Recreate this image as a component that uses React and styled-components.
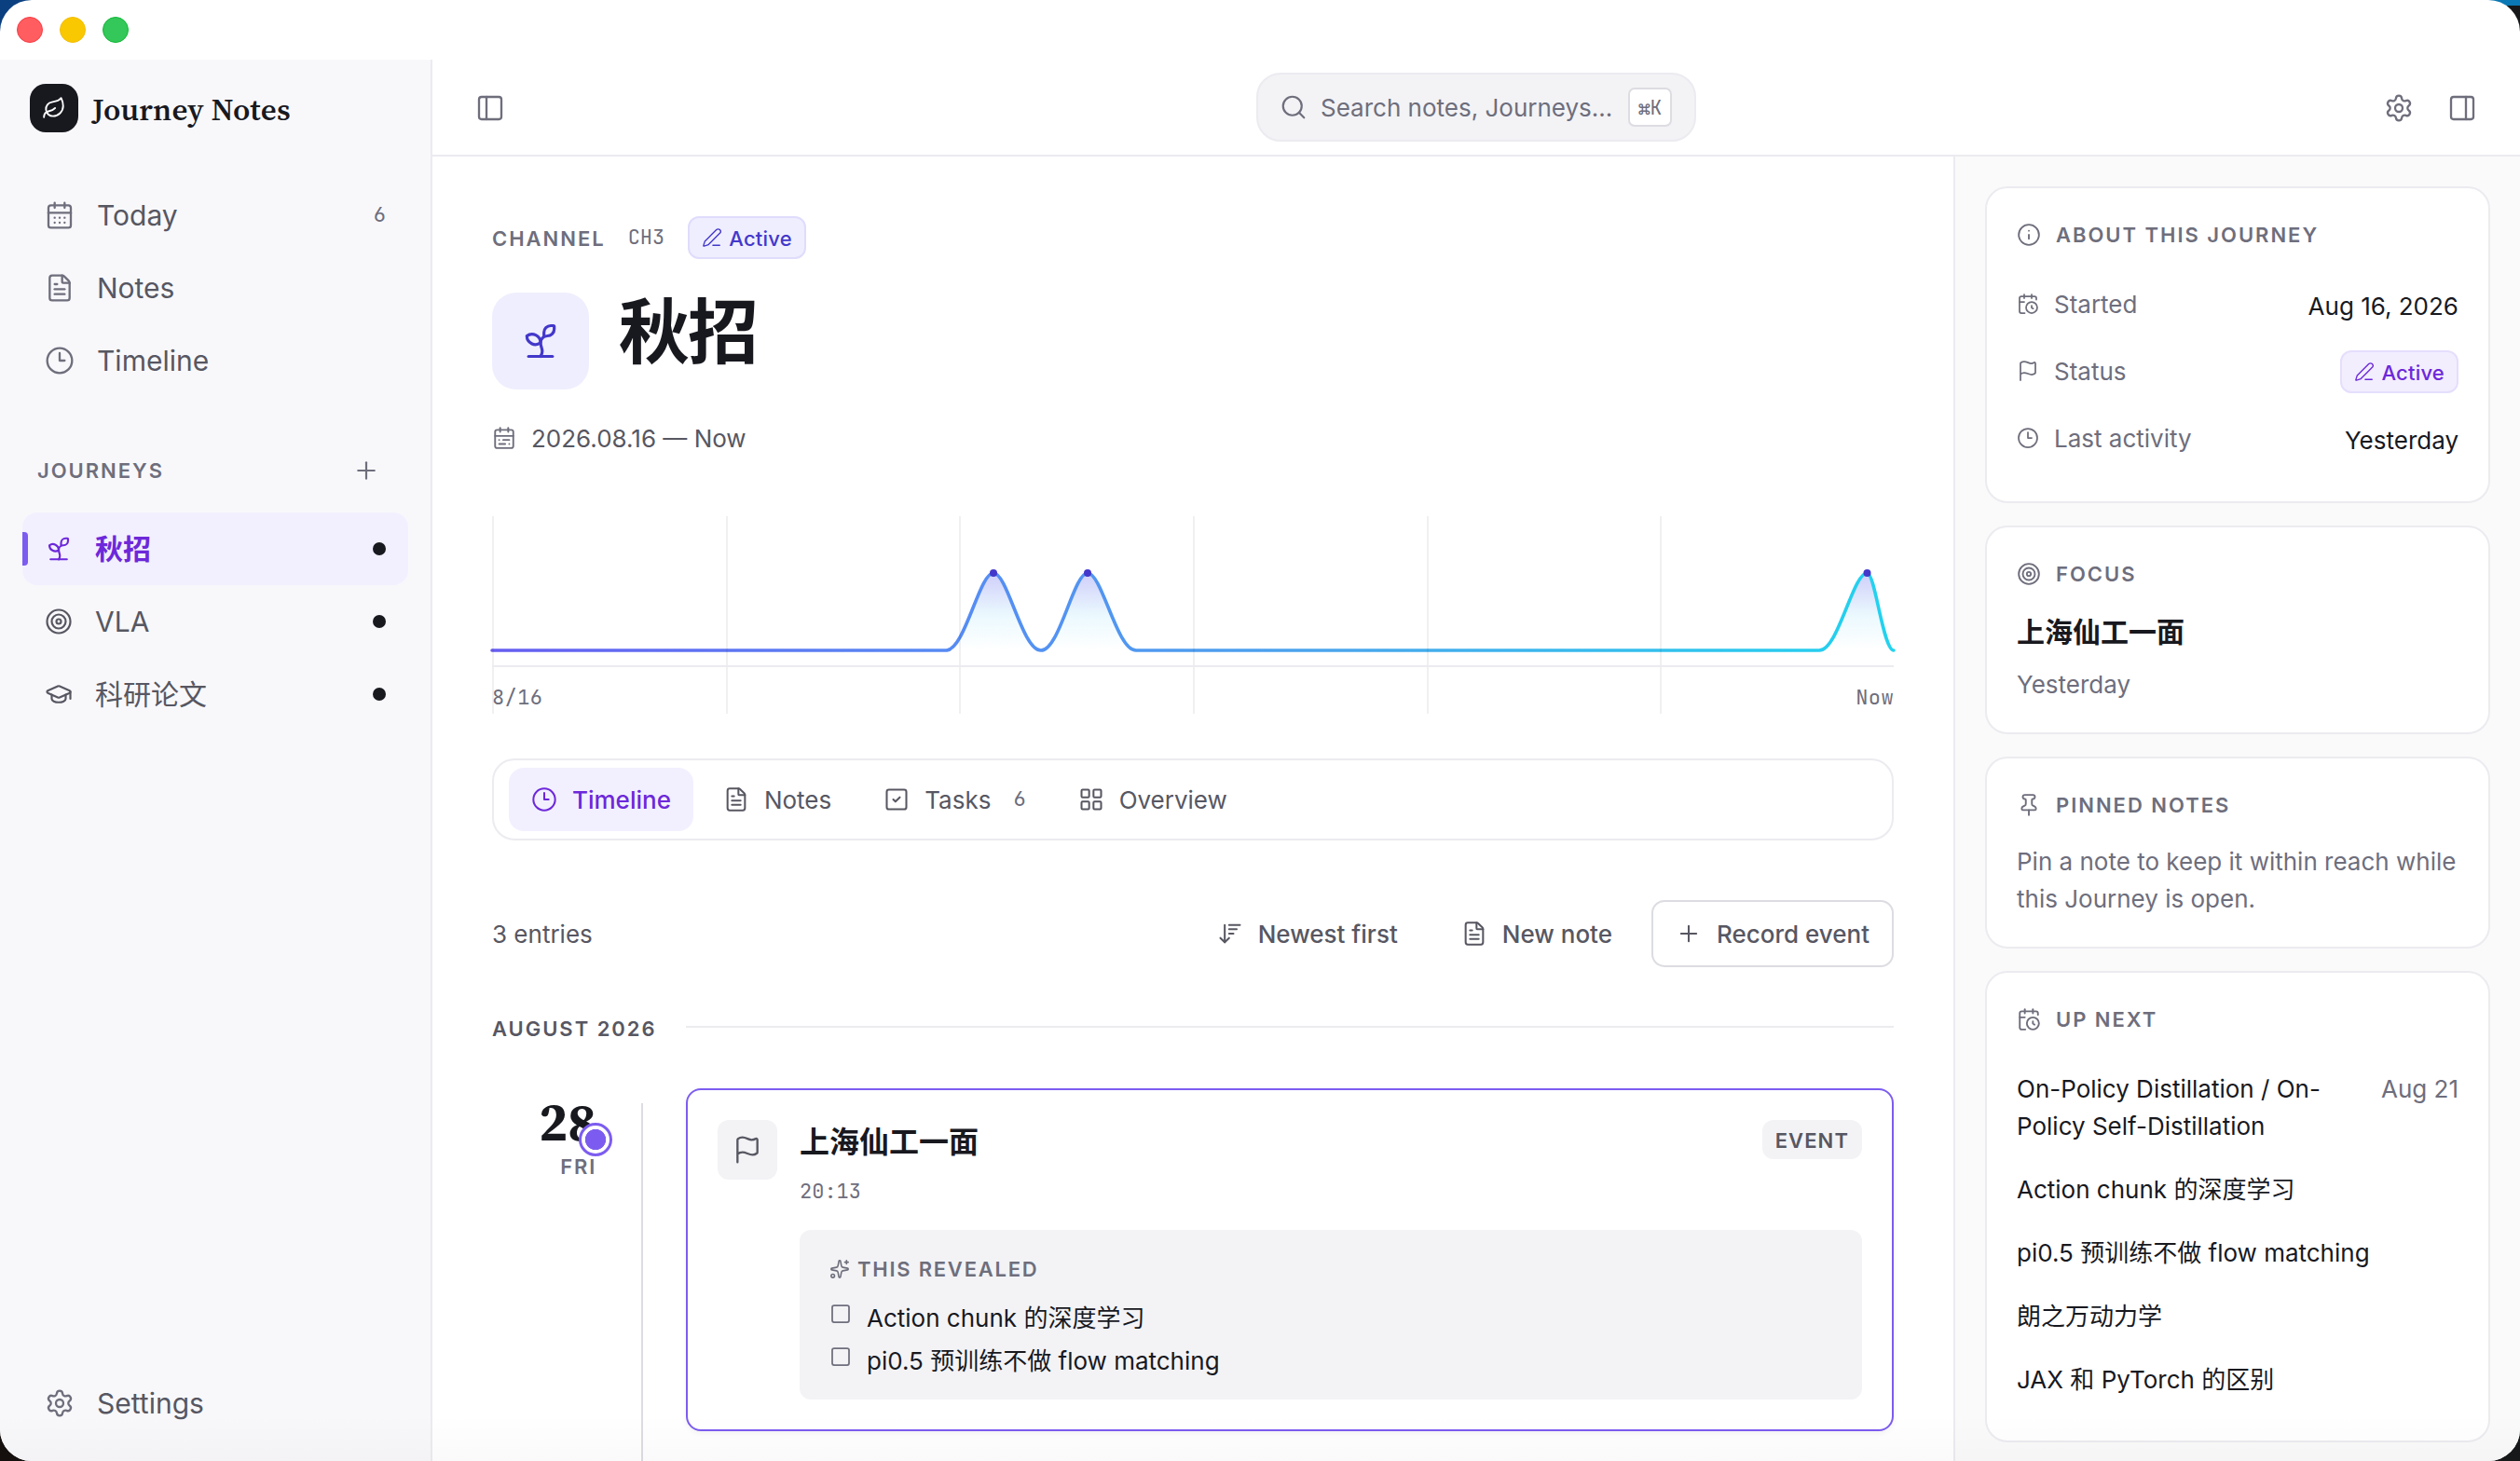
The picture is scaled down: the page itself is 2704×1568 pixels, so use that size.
import React from "react";
import styled, { createGlobalStyle } from "styled-components";
import {
  ArrowDownWideNarrow,
  CalendarClock,
  CalendarDays,
  CalendarRange,
  Clock3,
  FileText,
  Flag,
  GraduationCap,
  Info,
  LayoutGrid,
  Leaf,
  PanelLeft,
  PanelRight,
  PenLine,
  Pin,
  Plus,
  Search,
  Settings,
  Sparkles,
  Sprout,
  Square,
  SquareCheck,
  Target
} from "lucide-react";

const SANS = `Inter, "Noto Sans CJK SC", sans-serif`;
const SERIF = `"Source Serif 4", "Liberation Serif", serif`;
const MONO = `"JetBrains Mono", "DejaVu Sans Mono", monospace`;

const ink = "#18191f";
const body = "#575762";
const muted = "#6e6e7c";
const line = "#ebebf0";
const lineStrong = "#dcdce2";
const subtle = "#f3f3f6";
const violet = "#7c5cf0";
const violetText = "#6d28d9";
const violetSoft = "#f2f0ff";
const indigo = "#4338ca";
const indigoSoft = "#efeefe";

const GlobalStyle = createGlobalStyle`
  * {
    box-sizing: border-box;
  }
  html,
  body,
  #root {
    height: 100%;
    margin: 0;
  }
  body {
    overflow: hidden;
    font-family: ${SANS};
    font-size: 26px;
    color: ${ink};
    -webkit-font-smoothing: antialiased;
  }
  svg {
    display: block;
    flex-shrink: 0;
  }
`;

const Desktop = styled.div`
  height: 1568px;
  width: 2704px;
  background: linear-gradient(#0a78b4 0 6px, transparent 6px) right top / 50% 100%
      no-repeat,
    linear-gradient(#0b4080 0 50%, #15100e 50%) left / 50% 100% no-repeat,
    #16181a;
`;
const Window = styled.div`
  position: relative;
  height: 100%;
  display: flex;
  flex-direction: column;
  overflow: hidden;
  border-radius: 34px;
  background: #fff;
  &::after {
    content: "";
    position: absolute;
    left: 0;
    right: 0;
    bottom: 0;
    height: 50px;
    background: linear-gradient(rgba(0, 0, 0, 0), rgba(0, 0, 0, 0.02));
    pointer-events: none;
  }
`;
const TitleBar = styled.div`
  height: 64px;
  flex-shrink: 0;
  display: flex;
  align-items: center;
  gap: 18px;
  padding-left: 18px;
`;
const Light = styled.span`
  width: 28px;
  height: 28px;
  border-radius: 50%;
  background: ${props => props.$fill};
  border: 1px solid ${props => props.$edge};
`;
const Layout = styled.div`
  flex: 1;
  min-height: 0;
  display: flex;
`;

/* Sidebar */
const Sidebar = styled.aside`
  width: 464px;
  flex-shrink: 0;
  display: flex;
  flex-direction: column;
  background: #f8f8fb;
  border-right: 2px solid ${line};
  padding: 0 24px 23px;
`;
const Brand = styled.div`
  height: 104px;
  display: flex;
  align-items: center;
  gap: 15px;
  padding-left: 8px;
`;
const BrandMark = styled.span`
  width: 52px;
  height: 52px;
  display: grid;
  place-items: center;
  border-radius: 17px;
  background: ${ink};
  color: #fff;
`;
const BrandName = styled.span`
  padding-top: 2px;
  font-family: ${SERIF};
  font-size: 33px;
  font-weight: 600;
  letter-spacing: 0.2px;
  white-space: nowrap;
`;
const NavList = styled.nav`
  display: flex;
  flex-direction: column;
  margin-top: ${props => props.$top || 0}px;
`;
const NavItem = styled.a`
  position: relative;
  height: 78px;
  display: flex;
  align-items: center;
  gap: 24px;
  padding: 0 24px;
  border-radius: 16px;
  font-size: 30px;
  color: ${props => (props.$active ? violetText : body)};
  font-weight: ${props => (props.$active ? 700 : 400)};
  background: ${props => (props.$active ? violetSoft : "transparent")};
  svg {
    color: ${props =>
      props.$active ? violetText : props.$journey ? body : muted};
  }
  &::before {
    content: "";
    display: ${props => (props.$active ? "block" : "none")};
    position: absolute;
    left: 0;
    top: 21px;
    width: 6px;
    height: 36px;
    border-radius: 0 4px 4px 0;
    background: ${violet};
  }
`;
const NavLabel = styled.span`
  flex: 1;
  line-height: 44px;
`;
const Count = styled.span`
  font-family: ${MONO};
  font-size: 22px;
  font-weight: 400;
  line-height: 30px;
  color: ${muted};
`;
const Dot = styled.span`
  width: 14px;
  height: 14px;
  border-radius: 50%;
  background: ${ink};
`;
const SectionHead = styled.div`
  height: 60px;
  margin-top: 49px;
  display: flex;
  align-items: center;
  justify-content: space-between;
  padding: 0 30px 0 16px;
  color: ${muted};
`;
const Caps = styled.span`
  font-size: 22px;
  font-weight: 600;
  letter-spacing: ${props => props.$track || 1.98}px;
  line-height: 30px;
  padding-top: ${props => props.$drop || 0}px;
  white-space: nowrap;
  color: ${props => props.$color || muted};
`;
const Spacer = styled.div`
  flex: 1;
`;

/* Top bar */
const Column = styled.div`
  flex: 1;
  min-width: 0;
  display: flex;
  flex-direction: column;
`;
const TopBar = styled.header`
  height: 104px;
  flex-shrink: 0;
  display: grid;
  grid-template-columns: 1fr auto 1fr;
  align-items: center;
  border-bottom: 2px solid ${line};
  padding: 0 46px;
  color: ${muted};
`;
const TopActions = styled.div`
  display: flex;
  gap: 36px;
  padding-top: 2px;
  justify-content: ${props => (props.$end ? "flex-end" : "flex-start")};
`;
const SearchBox = styled.div`
  width: 472px;
  height: 74px;
  display: flex;
  align-items: center;
  padding: 0 24px 0 23px;
  border: 2px solid ${line};
  border-radius: 26px;
  background: ${subtle};
  white-space: nowrap;
`;
const SearchText = styled.span`
  flex: 1;
  margin-left: 14px;
`;
const Kbd = styled.kbd`
  height: 42px;
  width: 47px;
  display: grid;
  place-items: center;
  border: 2px solid ${lineStrong};
  border-radius: 7px;
  background: #fff;
  font-family: ${MONO};
  font-size: 21px;
`;
const Content = styled.div`
  flex: 1;
  min-height: 0;
  display: flex;
`;

/* Journey page */
const Main = styled.main`
  width: 1632px;
  padding: 64px 64px 0;
  overflow: hidden;
`;
const Eyebrow = styled.div`
  height: 46px;
  display: flex;
  align-items: center;
`;
const Channel = styled.span`
  margin: -1px 25px 0 24px;
  font-family: ${MONO};
  font-size: 22px;
  color: ${muted};
`;
const Chip = styled.span`
  height: 46px;
  display: inline-flex;
  align-items: center;
  gap: 7px;
  padding: 0 13px;
  border: 2px solid ${props => (props.$indigo ? "#dfdcfc" : "#e6defc")};
  border-radius: 12px;
  background: ${props => (props.$indigo ? indigoSoft : "#f2eefe")};
  color: ${props => (props.$indigo ? indigo : violetText)};
  font-size: 22px;
  font-weight: 500;
  line-height: 30px;
  letter-spacing: 0.22px;
`;
const ChipLabel = styled.span`
  padding-top: 1px;
`;
const TitleRow = styled.div`
  margin-top: 36px;
  height: 104px;
  display: flex;
  gap: 32px;
`;
const TitleIcon = styled.span`
  width: 104px;
  height: 104px;
  display: grid;
  place-items: center;
  border-radius: 26px;
  background: ${indigoSoft};
  color: ${indigo};
`;
const Title = styled.h1`
  margin: 0;
  font-size: 76px;
  font-weight: 700;
  line-height: 84px;
  letter-spacing: -2px;
`;
const DateRow = styled.div`
  margin-top: 32px;
  height: 40px;
  display: flex;
  align-items: center;
  gap: 16px;
  color: ${body};
  svg {
    color: ${muted};
  }
`;
const Chart = styled.div`
  margin-top: 64px;
  height: 212px;
  svg {
    overflow: visible;
  }
`;
const Tabs = styled.div`
  margin-top: 48px;
  height: 88px;
  display: flex;
  gap: 8px;
  padding: 8px 16px;
  border: 2px solid ${line};
  border-radius: 24px;
`;
const Tab = styled.button`
  display: flex;
  align-items: center;
  gap: 16px;
  padding: 0 24px;
  border: 0;
  border-radius: 16px;
  font: ${props => (props.$active ? 500 : 400)} 26px ${SANS};
  background: ${props => (props.$active ? violetSoft : "none")};
  color: ${props => (props.$active ? violetText : body)};
  ${Count} {
    margin-left: 8px;
  }
`;
const Toolbar = styled.div`
  margin-top: 64px;
  height: 72px;
  display: flex;
  align-items: center;
  gap: 16px;
  color: ${body};
`;
const Button = styled.button`
  height: 72px;
  display: flex;
  align-items: center;
  gap: 16px;
  padding: 0 24px;
  border: 2px solid ${props => (props.$outlined ? lineStrong : "transparent")};
  border-radius: 14px;
  background: none;
  font: 500 26px ${SANS};
  color: ${body};
`;
const MonthRow = styled.div`
  margin-top: 45px;
  height: 40px;
  display: flex;
  align-items: center;
`;
const MonthLabel = styled.div`
  width: 208px;
  display: flex;
`;
const Rule = styled.span`
  flex: 1;
  height: 2px;
  margin-top: -2px;
  background: ${line};
`;
const Entry = styled.div`
  margin-top: 45px;
  display: grid;
  grid-template-columns: 112px 98px 1fr;
  height: 440px;
`;
const EntryDate = styled.div`
  position: relative;
  display: flex;
  flex-direction: column;
  align-items: flex-end;
  padding-top: 6px;
`;
const Day = styled.span`
  margin-bottom: 3px;
  font-family: ${SERIF};
  font-size: 57px;
  font-weight: 700;
  line-height: 60px;
`;
const Marker = styled.span`
  position: absolute;
  right: -17px;
  top: 37px;
  width: 36px;
  height: 36px;
  border: 3px solid ${violet};
  border-radius: 50%;
  background: radial-gradient(circle, ${violet} 10.8px, #fff 11.5px);
`;
const Rail = styled.span`
  width: 2px;
  margin: 16px 0 0 48px;
  background: ${lineStrong};
`;
const EventCard = styled.article`
  height: 368px;
  margin-left: -2px;
  display: grid;
  grid-template-columns: 64px 1fr;
  column-gap: 24px;
  padding: 32px;
  border: 2px solid ${violet};
  border-radius: 16px;
  box-shadow: 0 2px 6px rgba(20, 20, 40, 0.05);
`;
const EventIcon = styled.span`
  width: 64px;
  height: 64px;
  display: grid;
  place-items: center;
  border-radius: 12px;
  background: ${subtle};
  color: ${body};
`;
const EventHead = styled.div`
  height: 118px;
  display: flex;
  justify-content: space-between;
  align-items: flex-start;
`;
const EventTitle = styled.div`
  font-size: 32px;
  font-weight: 700;
  line-height: 48px;
`;
const EventTime = styled.div`
  margin-top: 14px;
  font-family: ${MONO};
  font-size: 22px;
  line-height: 30px;
  color: ${muted};
`;
const EventBadge = styled.span`
  height: 42px;
  display: flex;
  align-items: center;
  padding: 0 14px;
  border-radius: 12px;
  background: ${subtle};
`;
const Revealed = styled.div`
  height: 182px;
  padding: 26px 32px 0;
  border-radius: 12px;
  background: ${subtle};
`;
const RevealedHead = styled.div`
  height: 31px;
  margin-bottom: 15px;
  display: flex;
  align-items: center;
  gap: 8px;
  color: ${muted};
`;
const RevealedItem = styled.div`
  height: 46px;
  display: flex;
  align-items: center;
  gap: 16px;
  line-height: 40px;
  svg {
    margin-top: -10px;
    color: ${muted};
  }
`;

/* Inspector */
const Inspector = styled.aside`
  width: 608px;
  display: flex;
  flex-direction: column;
  gap: 24px;
  padding: 32px 32px 0;
  border-left: 2px solid ${line};
  background: #fafafa;
`;
const Card = styled.section`
  height: ${props => props.$height}px;
  flex-shrink: 0;
  padding: 32px;
  border: 2px solid ${line};
  border-radius: 24px;
  background: #fff;
`;
const CardHead = styled.div`
  height: 36px;
  display: flex;
  align-items: center;
  gap: 16px;
  color: ${muted};
`;
const Facts = styled.div`
  margin-top: 20px;
`;
const Fact = styled.div`
  height: 72px;
  display: flex;
  align-items: center;
  gap: 16px;
  color: ${muted};
`;
const FactValue = styled.span`
  margin: ${props => (props.$chip ? 2 : 5)}px 0 0 auto;
  color: ${ink};
`;
const FocusTitle = styled.div`
  margin-top: 22px;
  font-size: 30px;
  font-weight: 700;
  line-height: 44px;
`;
const Muted = styled.p`
  margin: ${props => props.$top}px 0 0;
  line-height: 39.5px;
  color: ${muted};
`;
const NextList = styled.div`
  margin-top: 37px;
  display: flex;
  flex-direction: column;
  gap: 28px;
`;
const NextItem = styled.div`
  display: flex;
  justify-content: space-between;
  gap: 40px;
  line-height: 40px;
  span:last-child:not(:first-child) {
    color: ${muted};
    white-space: nowrap;
  }
`;

const Icon = ({ as: Glyph, size = 32 }) => (
  <Glyph size={size} strokeWidth={1.75} />
);

const CardTitle = ({ icon, children }) => (
  <CardHead>
    <Icon as={icon} size={26} />
    <Caps>{children}</Caps>
  </CardHead>
);

const Status = ({ indigo: isIndigo }) => (
  <Chip $indigo={isIndigo}>
    <PenLine size={22} strokeWidth={1.5} />
    <ChipLabel>Active</ChipLabel>
  </Chip>
);

const BASE = 144;
const PEAK = 61;
const bumps = [
  [487, 538, 589],
  [589, 639, 691],
  [1424, 1475.5, 1504]
];
const bumpPath = ([from, mid, to]) => {
  const a = mid - from;
  const b = to - mid;
  return `C${from + a * 0.4} ${BASE} ${mid - a * 0.3} ${PEAK} ${mid} ${PEAK} C${mid +
    b * 0.3} ${PEAK} ${to - b * 0.4} ${BASE} ${to} ${BASE}`;
};
const curve = `M0 ${BASE} ${bumps
  .map(bump => `H${bump[0]} ${bumpPath(bump)}`)
  .join(" ")}`;

const ActivityChart = () => (
  <Chart>
    <svg width="1504" height="212" viewBox="0 0 1504 212" fill="none">
      <defs>
        <linearGradient
          id="stroke"
          gradientUnits="userSpaceOnUse"
          x1="0"
          x2="1504"
          y1="0"
          y2="0"
        >
          <stop offset="0" stopColor="#665df1" />
          <stop offset="0.35" stopColor="#558ef3" />
          <stop offset="0.6" stopColor="#4aa5ec" />
          <stop offset="1" stopColor="#22d3ee" />
        </linearGradient>
        <linearGradient id="area" x1="0" x2="0" y1="0" y2="1">
          <stop offset="0" stopColor="#cfcefa" />
          <stop offset="0.55" stopColor="#ebf9fe" />
          <stop offset="1" stopColor="#ffffff" />
        </linearGradient>
      </defs>
      <path d={`${curve} Z`} fill="url(#area)" />
      <path
        d={curve}
        stroke="url(#stroke)"
        strokeWidth="3.6"
        strokeLinecap="round"
        strokeLinejoin="round"
      />
      {bumps.map(([, x]) => (
        <circle key={x} cx={x} cy={PEAK} r="4" fill={indigo} />
      ))}
      {[0, 1, 2, 3, 4, 5].map(i => (
        <rect
          key={i}
          x={Math.round((i * 1504) / 6)}
          width="2"
          height="212"
          fill="rgba(24, 24, 50, 0.065)"
        />
      ))}
      <rect y="160" width="1504" height="2" fill={line} />
      <g fill={muted} fontFamily={MONO} fontSize="22" letterSpacing="0.4">
        <text x="0" y="202">
          8/16
        </text>
        <text x="1504" y="202" textAnchor="end">
          Now
        </text>
      </g>
    </svg>
  </Chart>
);

const nav = [
  { label: "Today", icon: CalendarDays, count: 6 },
  { label: "Notes", icon: FileText },
  { label: "Timeline", icon: Clock3 }
];
const journeys = [
  { label: "秋招", icon: Sprout, active: true },
  { label: "VLA", icon: Target },
  { label: "科研论文", icon: GraduationCap }
];
const tabs = [
  { label: "Timeline", icon: Clock3, active: true },
  { label: "Notes", icon: FileText },
  { label: "Tasks", icon: SquareCheck, count: 6 },
  { label: "Overview", icon: LayoutGrid }
];
const revealed = ["Action chunk 的深度学习", "pi0.5 预训练不做 flow matching"];
const upNext = [
  { label: "On-Policy Distillation / On-Policy Self-Distillation", date: "Aug 21" },
  { label: "Action chunk 的深度学习" },
  { label: "pi0.5 预训练不做 flow matching" },
  { label: "朗之万动力学" },
  { label: "JAX 和 PyTorch 的区别" }
];

const App = () => (
  <>
    <GlobalStyle />
    <Desktop>
      <Window>
        <TitleBar>
          <Light $fill="#ff5d60" $edge="#f93c45" />
          <Light $fill="#fac800" $edge="#f0be08" />
          <Light $fill="#34c759" $edge="#10b936" />
        </TitleBar>
        <Layout>
          <Sidebar>
            <Brand>
              <BrandMark>
                <Icon as={Leaf} size={26} />
              </BrandMark>
              <BrandName>Journey Notes</BrandName>
            </Brand>
            <NavList $top={24}>
              {nav.map(item => (
                <NavItem key={item.label}>
                  <Icon as={item.icon} />
                  <NavLabel>{item.label}</NavLabel>
                  {item.count && <Count>{item.count}</Count>}
                </NavItem>
              ))}
            </NavList>
            <SectionHead>
              <Caps>JOURNEYS</Caps>
              <Icon as={Plus} size={30} />
            </SectionHead>
            <NavList $top={15}>
              {journeys.map(item => (
                <NavItem key={item.label} $active={item.active} $journey>
                  <Icon as={item.icon} size={30} />
                  <NavLabel>{item.label}</NavLabel>
                  <Dot />
                </NavItem>
              ))}
            </NavList>
            <Spacer />
            <NavItem>
              <Icon as={Settings} />
              <NavLabel>Settings</NavLabel>
            </NavItem>
          </Sidebar>
          <Column>
            <TopBar>
              <TopActions>
                <Icon as={PanelLeft} />
              </TopActions>
              <SearchBox>
                <Icon as={Search} size={30} />
                <SearchText>Search notes, Journeys...</SearchText>
                <Kbd>⌘K</Kbd>
              </SearchBox>
              <TopActions $end>
                <Icon as={Settings} />
                <Icon as={PanelRight} />
              </TopActions>
            </TopBar>
            <Content>
              <Main>
                <Eyebrow>
                  <Caps $drop={2}>CHANNEL</Caps>
                  <Channel>CH3</Channel>
                  <Status indigo />
                </Eyebrow>
                <TitleRow>
                  <TitleIcon>
                    <Icon as={Sprout} size={44} />
                  </TitleIcon>
                  <Title>秋招</Title>
                </TitleRow>
                <DateRow>
                  <Icon as={CalendarRange} size={26} />
                  2026.08.16 — Now
                </DateRow>
                <ActivityChart />
                <Tabs>
                  {tabs.map(tab => (
                    <Tab key={tab.label} $active={tab.active}>
                      <Icon as={tab.icon} size={28} />
                      {tab.label}
                      {tab.count && <Count>{tab.count}</Count>}
                    </Tab>
                  ))}
                </Tabs>
                <Toolbar>
                  3 entries
                  <Spacer />
                  <Button>
                    <Icon as={ArrowDownWideNarrow} size={28} />
                    Newest first
                  </Button>
                  <Button>
                    <Icon as={FileText} size={28} />
                    New note
                  </Button>
                  <Button $outlined>
                    <Icon as={Plus} size={28} />
                    Record event
                  </Button>
                </Toolbar>
                <MonthRow>
                  <MonthLabel>
                    <Caps $color={body} $drop={2}>
                      AUGUST 2026
                    </Caps>
                  </MonthLabel>
                  <Rule />
                </MonthRow>
                <Entry>
                  <EntryDate>
                    <Day>28</Day>
                    <Caps $track={1.76}>FRI</Caps>
                    <Marker />
                  </EntryDate>
                  <Rail />
                  <EventCard>
                    <EventIcon>
                      <Icon as={Flag} />
                    </EventIcon>
                    <div>
                      <EventHead>
                        <div>
                          <EventTitle>上海仙工一面</EventTitle>
                          <EventTime>20:13</EventTime>
                        </div>
                        <EventBadge>
                          <Caps $color={body} $track={1.1} $drop={2}>
                            EVENT
                          </Caps>
                        </EventBadge>
                      </EventHead>
                      <Revealed>
                        <RevealedHead>
                          <Icon as={Sparkles} size={22} />
                          <Caps $track={1.76}>THIS REVEALED</Caps>
                        </RevealedHead>
                        {revealed.map(item => (
                          <RevealedItem key={item}>
                            <Icon as={Square} size={24} />
                            {item}
                          </RevealedItem>
                        ))}
                      </Revealed>
                    </div>
                  </EventCard>
                </Entry>
              </Main>
              <Inspector>
                <Card $height={340}>
                  <CardTitle icon={Info}>ABOUT THIS JOURNEY</CardTitle>
                  <Facts>
                    <Fact>
                      <Icon as={CalendarClock} size={24} />
                      Started
                      <FactValue>Aug 16, 2026</FactValue>
                    </Fact>
                    <Fact>
                      <Icon as={Flag} size={24} />
                      Status
                      <FactValue $chip>
                        <Status />
                      </FactValue>
                    </Fact>
                    <Fact>
                      <Icon as={Clock3} size={24} />
                      Last activity
                      <FactValue>Yesterday</FactValue>
                    </Fact>
                  </Facts>
                </Card>
                <Card $height={224}>
                  <CardTitle icon={Target}>FOCUS</CardTitle>
                  <FocusTitle>上海仙工一面</FocusTitle>
                  <Muted $top={15}>Yesterday</Muted>
                </Card>
                <Card $height={206}>
                  <CardTitle icon={Pin}>PINNED NOTES</CardTitle>
                  <Muted $top={23}>
                    Pin a note to keep it within reach while this Journey is
                    open.
                  </Muted>
                </Card>
                <Card $height={506}>
                  <CardTitle icon={CalendarClock}>UP NEXT</CardTitle>
                  <NextList>
                    {upNext.map(item => (
                      <NextItem key={item.label}>
                        <span>{item.label}</span>
                        {item.date && <span>{item.date}</span>}
                      </NextItem>
                    ))}
                  </NextList>
                </Card>
              </Inspector>
            </Content>
          </Column>
        </Layout>
      </Window>
    </Desktop>
  </>
);
export default App;
